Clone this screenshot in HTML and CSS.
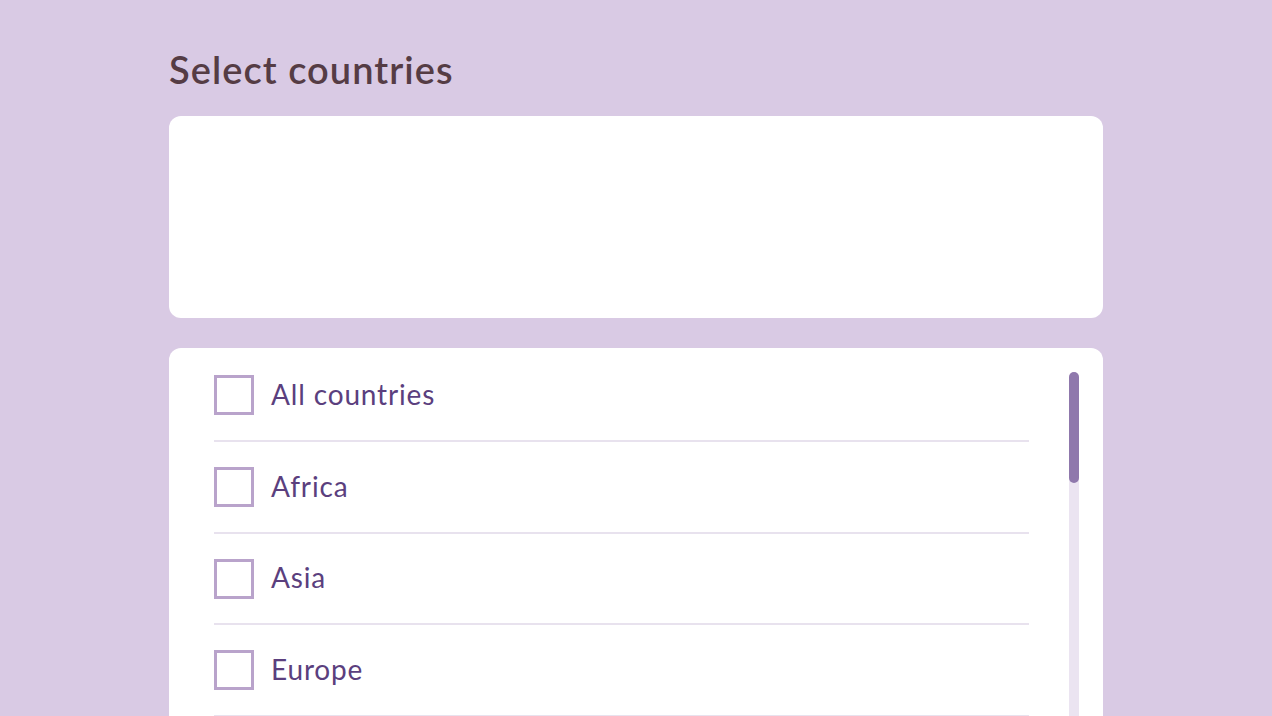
FILE: index.html
```html
<!DOCTYPE html>
<html lang="en">
<head>
<meta charset="utf-8">
<title>Select countries</title>
<link rel="stylesheet" href="styles.css">
</head>
<body>
<main class="page">
  <h1 class="title">Select countries</h1>
  <section class="card card-top"></section>
  <section class="card card-list">
    <ul class="list">
      <li class="row"><span class="box"></span><span class="label">All countries</span></li>
      <li class="row"><span class="box"></span><span class="label">Africa</span></li>
      <li class="row"><span class="box"></span><span class="label">Asia</span></li>
      <li class="row"><span class="box"></span><span class="label">Europe</span></li>
    </ul>
    <div class="track"><div class="thumb"></div></div>
  </section>
</main>
</body>
</html>
```
FILE: styles.css
```css
html, body {
  margin: 0;
  padding: 0;
  height: 100%;
  overflow: hidden;
}
body {
  background: #d9cae4;
  font-family: "Lato", "Open Sans", sans-serif;
}
.page {
  width: 934px;
  margin: 0 auto;
  padding-top: 45px;
  display: flex;
  flex-direction: column;
}
.title {
  margin: 0 0 23px;
  font-size: 38px;
  line-height: 48px;
  font-weight: 600;
  letter-spacing: 1.05px;
  color: #553c44;
}
.card {
  background: #ffffff;
  border-radius: 12px;
}
.card-top {
  height: 202px;
  margin-bottom: 30px;
}
.card-list {
  display: flex;
  padding: 24px 24px 0 45px;
  min-height: 400px;
}
.list {
  list-style: none;
  margin: 3px 0 0;
  padding: 0;
  flex: 1;
}
.row {
  display: flex;
  align-items: center;
  gap: 17px;
  padding: 25px 0 24.5px;
  border-bottom: 2px solid #e8e2ee;
}
.row:first-child {
  padding-top: 0;
  padding-bottom: 25px;
}
.box {
  width: 40px;
  height: 40px;
  box-sizing: border-box;
  border: 3px solid #b9a3cb;
  flex: none;
}
.label {
  font-size: 28px;
  line-height: 34px;
  padding-bottom: 3px;
  letter-spacing: 0.85px;
  color: #5b3f7e;
}
.track {
  width: 10px;
  margin-left: 40px;
  background: #ebe4f1;
  border-radius: 5px 5px 0 0;
  display: flex;
  flex-direction: column;
}
.thumb {
  height: 111px;
  background: #8f78ac;
  border-radius: 5px;
}
```
